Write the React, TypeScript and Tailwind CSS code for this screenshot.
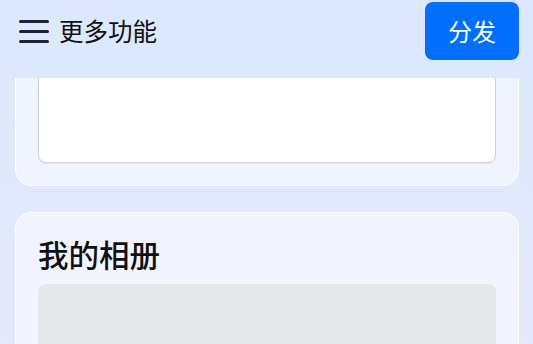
import React from 'react';

function MenuIcon() {
  return (
    <svg width="32" height="26" viewBox="0 0 32 26" className="text-[#1b2335]">
      <path d="M2.5 3.5H29.5M2.5 13.5H29.5M2.5 23.5H29.5" stroke="currentColor" strokeWidth="3" strokeLinecap="round" />
    </svg>
  );
}

export default function App() {
  return (
    <div
      className="h-screen overflow-hidden bg-gradient-to-b from-[#dbe8fd] to-[#e6e8fd] text-[#111] flex flex-col"
      style={{ fontFamily: '"Noto Sans CJK SC", "Noto Sans", sans-serif' }}
    >
      <header className="relative z-10 h-[78px] shrink-0 bg-[#dbe8fd] pl-[18px] pr-[14px] pt-[2px]">
        <div className="h-[58px] flex items-center justify-between">
          <div className="flex items-center gap-[9px]">
            <MenuIcon />
            <span className="text-[24.5px] leading-none">更多功能</span>
          </div>
          <button className="h-[58px] px-[23px] rounded-lg bg-[#006efe] text-white text-2xl leading-none">
            分发
          </button>
        </div>
      </header>

      <main className="flex-1 overflow-hidden flex flex-col gap-[26px] ml-[15px] mr-[14px]">
        <section className="-mt-[83px] shrink-0 rounded-2xl bg-white/50 border border-white p-[22px]">
          <textarea className="block w-full h-[145px] resize-none rounded-lg bg-white border border-[#d6d0d2] shadow-[0_1px_1px_rgba(0,0,0,0.06)]" />
        </section>

        <section className="shrink-0 rounded-2xl bg-white/50 border border-white px-[22px] pt-[23px] pb-[22px]">
          <h2 className="text-[30.5px] leading-9 font-medium mb-3">我的相册</h2>
          <div className="h-[200px] rounded-lg bg-[#e5e7eb]" />
        </section>
      </main>
    </div>
  );
}
